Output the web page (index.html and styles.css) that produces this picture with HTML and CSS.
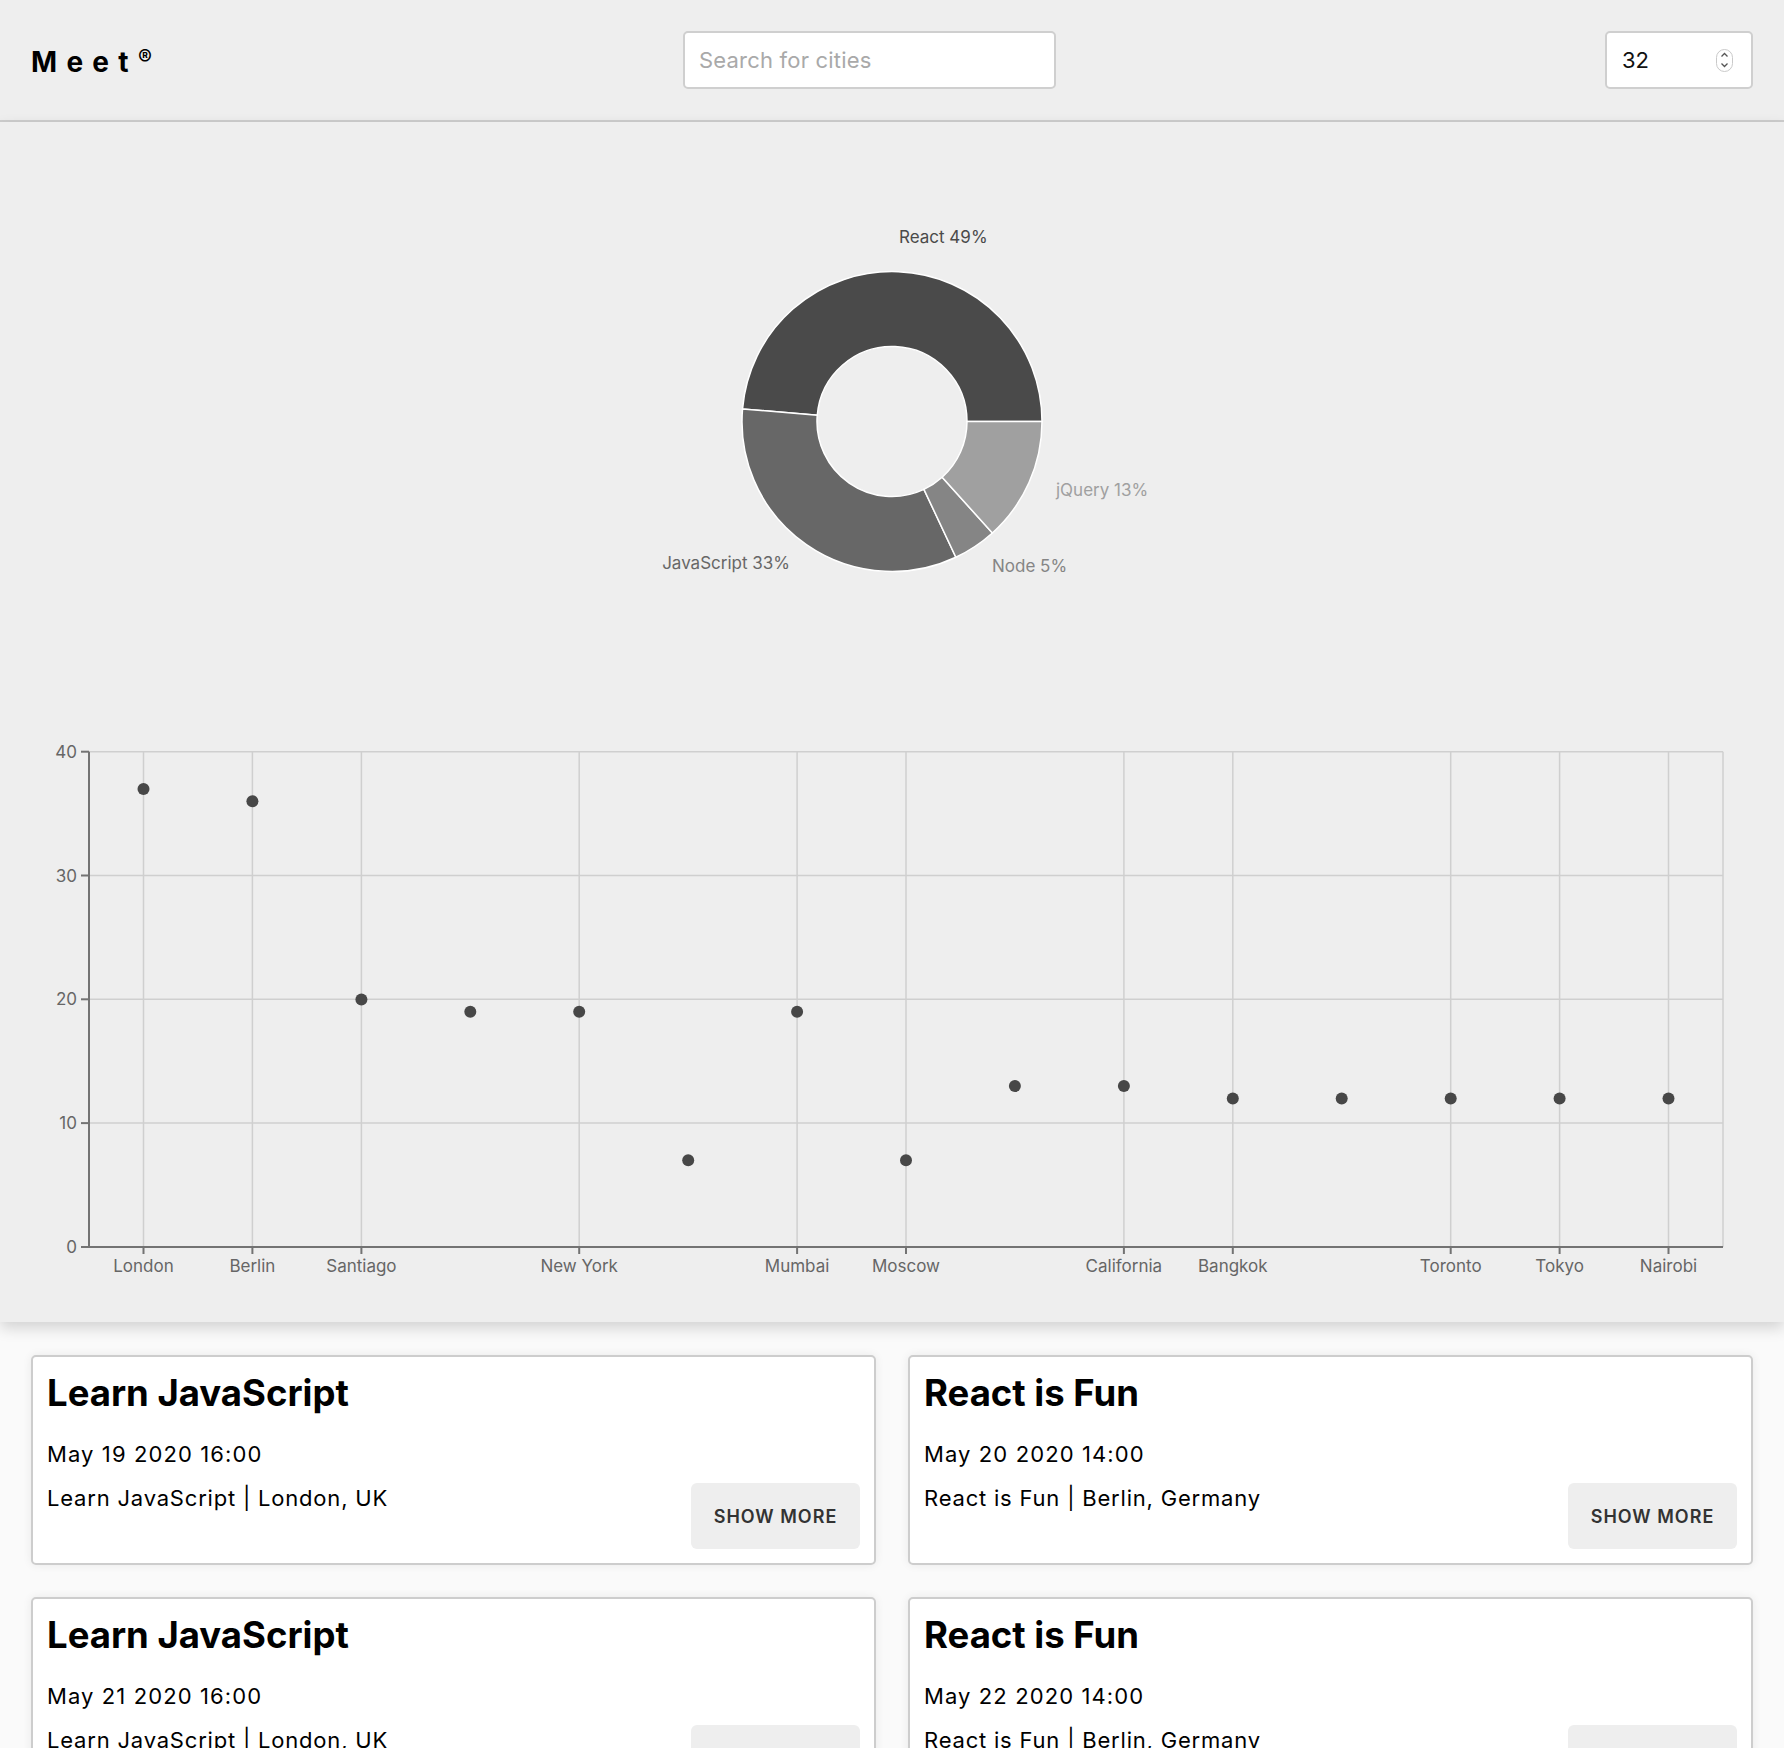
FILE: index.html
```html
<!DOCTYPE html>
<html lang="en">
<head>
<meta charset="utf-8">
<title>Meet</title>
<link rel="stylesheet" href="styles.css">
</head>
<body>
<header class="topbar">
  <div class="logo">Meet<span class="reg">®</span></div>
  <div class="search"><span class="placeholder">Search for cities</span></div>
  <div class="number">
    <span class="number-value">32</span>
    <svg class="spinner" width="17" height="23" viewBox="0 0 17 23">
      <rect x="0.5" y="0.5" width="16" height="22" rx="8" fill="#fff" stroke="#c9c9c9"/>
      <path d="M5.5 7.5 L8.5 4.5 L11.5 7.5" fill="none" stroke="#555" stroke-width="1.3"/>
      <path d="M5.5 14.5 L8.5 17.5 L11.5 14.5" fill="none" stroke="#555" stroke-width="1.3"/>
    </svg>
  </div>
</header>

<section class="charts">
  <svg class="pie" viewBox="0 0 1784 500" width="1784" height="500">
    <g stroke="#fff" stroke-width="1.5">
      <path fill="#4a4a4a" d="M1042 299.5 A150 150 0 0 0 742.53 286.95 L817.26 293.22 A75 75 0 0 1 967 299.5 Z"/>
      <path fill="#676767" d="M742.53 286.95 A150 150 0 0 0 955.87 435.22 L923.93 367.36 A75 75 0 0 1 817.26 293.22 Z"/>
      <path fill="#858585" d="M955.87 435.22 A150 150 0 0 0 992.37 410.97 L942.18 355.24 A75 75 0 0 1 923.93 367.36 Z"/>
      <path fill="#a0a0a0" d="M992.37 410.97 A150 150 0 0 0 1042 299.5 L967 299.5 A75 75 0 0 1 942.18 355.24 Z"/>
    </g>
    <g class="pie-label">
      <text x="899" y="115" fill="#4a4a4a">React 49%</text>
      <text x="790" y="441" fill="#676767" text-anchor="end">JavaScript 33%</text>
      <text x="992" y="444" fill="#858585">Node 5%</text>
      <text x="1056" y="368" fill="#a0a0a0">jQuery 13%</text>
    </g>
  </svg>

  <svg class="scatter" viewBox="0 0 1784 700" width="1784" height="700">
    <g class="grid">
      <line x1="89" x2="1723" y1="129.7" y2="129.7"/>
      <line x1="89" x2="1723" y1="253.5" y2="253.5"/>
      <line x1="89" x2="1723" y1="377.3" y2="377.3"/>
      <line x1="89" x2="1723" y1="501.1" y2="501.1"/>
      <line x1="143.5" x2="143.5" y1="129.7" y2="625"/>
      <line x1="252.4" x2="252.4" y1="129.7" y2="625"/>
      <line x1="361.4" x2="361.4" y1="129.7" y2="625"/>
      <line x1="579.2" x2="579.2" y1="129.7" y2="625"/>
      <line x1="797.1" x2="797.1" y1="129.7" y2="625"/>
      <line x1="906" x2="906" y1="129.7" y2="625"/>
      <line x1="1123.9" x2="1123.9" y1="129.7" y2="625"/>
      <line x1="1232.8" x2="1232.8" y1="129.7" y2="625"/>
      <line x1="1450.7" x2="1450.7" y1="129.7" y2="625"/>
      <line x1="1559.6" x2="1559.6" y1="129.7" y2="625"/>
      <line x1="1668.5" x2="1668.5" y1="129.7" y2="625"/>
      <line x1="1723" x2="1723" y1="129.7" y2="625"/>
    </g>
    <g class="axis">
      <line x1="89" x2="89" y1="129.7" y2="626"/>
      <line x1="88" x2="1723" y1="625" y2="625"/>
      <line x1="81" x2="89" y1="129.7" y2="129.7"/>
      <line x1="81" x2="89" y1="253.5" y2="253.5"/>
      <line x1="81" x2="89" y1="377.3" y2="377.3"/>
      <line x1="81" x2="89" y1="501.1" y2="501.1"/>
      <line x1="81" x2="89" y1="625" y2="625"/>
      <line x1="143.5" x2="143.5" y1="625" y2="632"/>
      <line x1="252.4" x2="252.4" y1="625" y2="632"/>
      <line x1="361.4" x2="361.4" y1="625" y2="632"/>
      <line x1="579.2" x2="579.2" y1="625" y2="632"/>
      <line x1="797.1" x2="797.1" y1="625" y2="632"/>
      <line x1="906" x2="906" y1="625" y2="632"/>
      <line x1="1123.9" x2="1123.9" y1="625" y2="632"/>
      <line x1="1232.8" x2="1232.8" y1="625" y2="632"/>
      <line x1="1450.7" x2="1450.7" y1="625" y2="632"/>
      <line x1="1559.6" x2="1559.6" y1="625" y2="632"/>
      <line x1="1668.5" x2="1668.5" y1="625" y2="632"/>
    </g>
    <g class="tick y-tick">
      <text x="77" y="129.7">40</text>
      <text x="77" y="253.5">30</text>
      <text x="77" y="377.3">20</text>
      <text x="77" y="501.1">10</text>
      <text x="77" y="625">0</text>
    </g>
    <g class="tick x-tick">
      <text x="143.5" y="644">London</text>
      <text x="252.4" y="644">Berlin</text>
      <text x="361.4" y="644">Santiago</text>
      <text x="579.2" y="644">New York</text>
      <text x="797.1" y="644">Mumbai</text>
      <text x="906" y="644">Moscow</text>
      <text x="1123.9" y="644">California</text>
      <text x="1232.8" y="644">Bangkok</text>
      <text x="1450.7" y="644">Toronto</text>
      <text x="1559.6" y="644">Tokyo</text>
      <text x="1668.5" y="644">Nairobi</text>
    </g>
    <g class="dots">
      <circle cx="143.5" cy="166.9" r="6"/>
      <circle cx="252.4" cy="179.3" r="6"/>
      <circle cx="361.4" cy="377.4" r="6"/>
      <circle cx="470.3" cy="389.8" r="6"/>
      <circle cx="579.2" cy="389.8" r="6"/>
      <circle cx="688.2" cy="538.3" r="6"/>
      <circle cx="797.1" cy="389.8" r="6"/>
      <circle cx="906" cy="538.3" r="6"/>
      <circle cx="1014.9" cy="464.1" r="6"/>
      <circle cx="1123.9" cy="464.1" r="6"/>
      <circle cx="1232.8" cy="476.4" r="6"/>
      <circle cx="1341.7" cy="476.4" r="6"/>
      <circle cx="1450.7" cy="476.4" r="6"/>
      <circle cx="1559.6" cy="476.4" r="6"/>
      <circle cx="1668.5" cy="476.4" r="6"/>
    </g>
  </svg>
</section>

<main class="events">
  <article class="card">
    <h2 class="card-title">Learn JavaScript</h2>
    <p class="card-date">May 19 2020 16:00</p>
    <div class="card-row">
      <p class="card-loc">Learn JavaScript | London, UK</p>
      <button class="btn">SHOW MORE</button>
    </div>
  </article>
  <article class="card">
    <h2 class="card-title">React is Fun</h2>
    <p class="card-date">May 20 2020 14:00</p>
    <div class="card-row">
      <p class="card-loc">React is Fun | Berlin, Germany</p>
      <button class="btn">SHOW MORE</button>
    </div>
  </article>
  <article class="card">
    <h2 class="card-title">Learn JavaScript</h2>
    <p class="card-date">May 21 2020 16:00</p>
    <div class="card-row">
      <p class="card-loc">Learn JavaScript | London, UK</p>
      <button class="btn">SHOW MORE</button>
    </div>
  </article>
  <article class="card">
    <h2 class="card-title">React is Fun</h2>
    <p class="card-date">May 22 2020 14:00</p>
    <div class="card-row">
      <p class="card-loc">React is Fun | Berlin, Germany</p>
      <button class="btn">SHOW MORE</button>
    </div>
  </article>
</main>
</body>
</html>
```

FILE: styles.css
```css
* { box-sizing: border-box; }

html, body {
  margin: 0;
  padding: 0;
}

body {
  background: #fafafa;
  font-family: Inter, "Noto Sans", "Liberation Sans", sans-serif;
  color: #000;
  width: 1784px;
  overflow: hidden;
}

.topbar {
  height: 122px;
  background: #eee;
  border-bottom: 2px solid #cdcdcd;
  display: grid;
  grid-template-columns: 652px 373px 1fr;
  align-items: center;
  padding: 0 31px;
}

.logo {
  font-size: 28px;
  font-weight: 700;
  letter-spacing: 9.3px;
  line-height: 1;
  margin-top: 2px;
}

.reg {
  font-size: 21px;
  font-weight: 700;
  vertical-align: 7px;
  letter-spacing: 0;
}

.search {
  height: 58px;
  background: #fff;
  border: 2px solid #cfcfcf;
  border-radius: 5px;
  display: flex;
  align-items: center;
  padding-left: 14px;
}

.placeholder {
  font-size: 22px;
  color: #a9a9a9;
  letter-spacing: 0.2px;
}

.number {
  justify-self: end;
  width: 148px;
  height: 58px;
  background: #fff;
  border: 2px solid #cfcfcf;
  border-radius: 5px;
  display: flex;
  align-items: center;
  justify-content: space-between;
  padding: 0 18px 0 15px;
}

.number-value {
  font-size: 22px;
  color: #111;
}

.spinner {
  display: block;
}

.charts {
  background: #eee;
  height: 1200px;
  box-shadow: 0 6px 14px rgba(0, 0, 0, 0.16);
  position: relative;
  z-index: 1;
}

.pie, .scatter {
  display: block;
}

.pie-label text {
  font-family: Inter, "Noto Sans", sans-serif;
  font-size: 17px;
  dominant-baseline: central;
}

.grid line {
  stroke: #cfcfcf;
  stroke-width: 1.5;
}

.axis line {
  stroke: #737373;
  stroke-width: 2;
}

.tick text {
  font-family: Inter, "Noto Sans", sans-serif;
  font-size: 17px;
  fill: #666;
  dominant-baseline: central;
}

.y-tick text { text-anchor: end; }
.x-tick text { text-anchor: middle; }

.dots circle { fill: #474747; }

.events {
  display: grid;
  grid-template-columns: 1fr 1fr;
  gap: 32px;
  padding: 33px 31px;
}

.card {
  background: #fff;
  border: 2px solid #cdcdcd;
  border-radius: 5px;
  box-shadow: 0 0 10px rgba(0, 0, 0, 0.07);
  padding: 14px;
}

.card-title {
  margin: 1px 0 0;
  font-size: 36.5px;
  font-weight: 700;
  line-height: 43.6px;
}

.card-date {
  margin: 25px 0 0;
  font-size: 22px;
  letter-spacing: 1.1px;
  line-height: 26.6px;
}

.card-row {
  margin-top: 16px;
  display: flex;
  justify-content: space-between;
  align-items: flex-start;
}

.card-loc {
  margin: 2px 0 0;
  font-size: 22px;
  letter-spacing: 0.8px;
  line-height: 26.6px;
}

.btn {
  width: 169px;
  height: 66px;
  border: none;
  border-radius: 6px;
  background: #eee;
  font-family: Inter, "Noto Sans", sans-serif;
  font-size: 18px;
  font-weight: 600;
  letter-spacing: 1px;
  color: #333;
  padding: 0;
}
```
